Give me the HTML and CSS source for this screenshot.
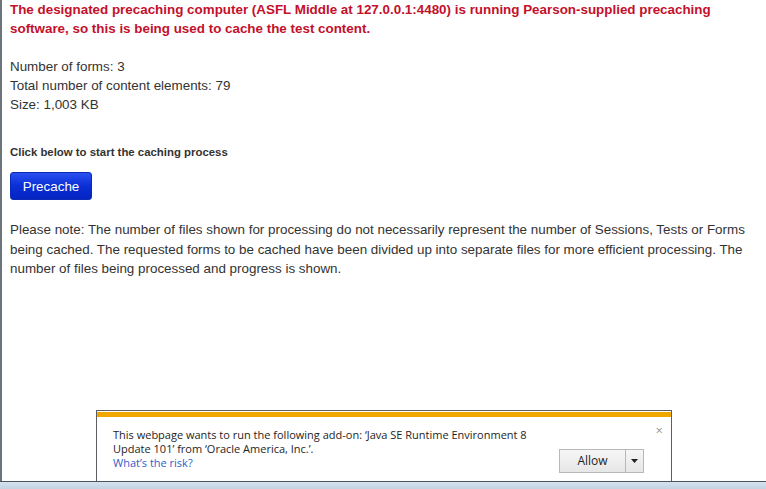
FILE: index.html
```html
<!DOCTYPE html>
<html>
<head>
<meta charset="utf-8">
<link rel="stylesheet" href="styles.css">
</head>
<body>
<div class="page">
  <p class="notice">The designated precaching computer (ASFL Middle at 127.0.0.1:4480) is running Pearson-supplied precaching software, so this is being used to cache the test content.</p>
  <div class="stats">
    <div>Number of forms: 3</div>
    <div>Total number of content elements: 79</div>
    <div>Size: 1,003 KB</div>
  </div>
  <div class="cta-label">Click below to start the caching process</div>
  <button class="precache">Precache</button>
  <p class="note">Please note: The number of files shown for processing do not necessarily represent the number of Sessions, Tests or Forms being cached. The requested forms to be cached have been divided up into separate files for more efficient processing. The number of files being processed and progress is shown.</p>
</div>

<div class="infobar">
  <div class="infobar-stripe"></div>
  <div class="infobar-body">
    <div class="infobar-text">
      <div>This webpage wants to run the following add-on: ‘Java SE Runtime Environment 8</div>
      <div>Update 101’ from ‘Oracle America, Inc.’.</div>
      <a class="risk">What’s the risk?</a>
    </div>
    <span class="close">×</span>
    <div class="allow">
      <span class="allow-main">Allow</span>
      <span class="allow-drop"><svg width="7" height="4" viewBox="0 0 7 4"><path d="M0 0h7L3.5 4z" fill="#222"/></svg></span>
    </div>
  </div>
</div>

<div class="statusbar"></div>
</body>
</html>
```

FILE: styles.css
```css
html, body {
  margin: 0;
  padding: 0;
  height: 100%;
  background: #fff;
}
body {
  font-family: "Liberation Sans", Arial, sans-serif;
  color: #333;
  overflow: hidden;
}
.page {
  border-left: 2px solid #6d737b;
  min-height: 100%;
  box-sizing: border-box;
  padding: 0 8px;
}
.notice {
  margin: 0;
  padding-top: 0;
  font-weight: bold;
  font-size: 13.4px;
  line-height: 19px;
  color: #c3102b;
}
.stats {
  margin-top: 19px;
  font-size: 13.4px;
  line-height: 19px;
}
.cta-label {
  margin-top: 31px;
  font-size: 11.4px;
  font-weight: bold;
  line-height: 14px;
}
.precache {
  display: block;
  margin-top: 13px;
  width: 82px;
  height: 28px;
  border: 1px solid #0a2bb8;
  border-radius: 3px;
  background: linear-gradient(#2a4ff0, #0a2fd6 50%, #0524c0);
  color: #fff;
  font-family: "Liberation Sans", Arial, sans-serif;
  font-size: 13.4px;
  padding: 0;
}
.note {
  margin: 20px 0 0;
  font-size: 13.4px;
  line-height: 19.5px;
}
.infobar {
  position: absolute;
  left: 96px;
  top: 410px;
  width: 576px;
  height: 71px;
  box-sizing: border-box;
  border: 1px solid #5b5e63;
  border-bottom: none;
  background: #fff;
  font-family: "Open Sans", "Noto Sans", sans-serif;
  font-size: 11px;
  color: #1e1e1e;
}
.infobar-stripe {
  height: 5px;
  margin: 1px 0 0;
  background: #f0a800;
}
.infobar-body {
  position: relative;
  padding: 11px 16px 0;
}
.infobar-text {
  line-height: 14px;
}
.risk {
  color: #3060c8;
  display: block;
}
.close {
  position: absolute;
  right: 8px;
  top: 6px;
  color: #9a9a9a;
  font-size: 13px;
  line-height: 14px;
}
.allow {
  position: absolute;
  left: 462px;
  top: 32px;
  display: flex;
  height: 22px;
  border: 1px solid #b8b8b8;
  background: linear-gradient(#f6f6f6, #e6e6e6);
}
.allow-main {
  width: 65px;
  text-align: center;
  line-height: 22px;
  font-size: 12px;
  border-right: 1px solid #b8b8b8;
}
.allow-drop {
  width: 17px;
  display: flex;
  align-items: center;
  justify-content: center;
}
.statusbar {
  position: absolute;
  left: 0;
  right: 0;
  top: 481px;
  height: 8px;
  border-top: 1px solid #4a5560;
  background: linear-gradient(#d6e2ee, #c0d0e0);
}
```
